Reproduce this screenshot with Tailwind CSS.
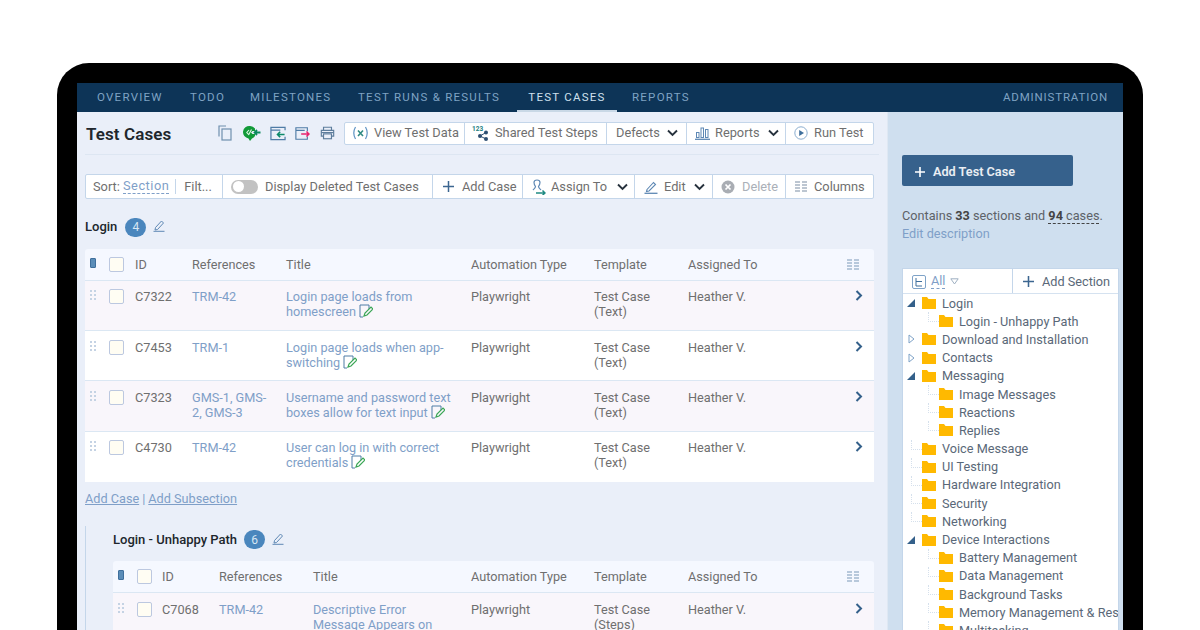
<!DOCTYPE html>
<html>
<head>
<meta charset="utf-8">
<script src="https://cdn.jsdelivr.net/npm/@tailwindcss/browser@4"></script>
</head>
<body class="bg-white font-['Roboto',sans-serif] text-[12.7px] text-[#6f6f6f]">
<div class="h-[630px] w-[1200px] overflow-hidden pt-[63px] px-[57px]">
  <div class="h-[567px] rounded-t-[32px] bg-black pt-[20px] px-[20px]">
    <div class="h-[547px] overflow-hidden flex flex-col">
      <!-- nav -->
      <nav class="h-[29px] shrink-0 bg-[#0d3457] flex items-stretch text-[11.5px] tracking-[1.25px] text-[#7fa3c4]">
        <a class="pl-[20px] w-[113px] flex items-center">OVERVIEW</a>
        <a class="w-[60px] flex items-center">TODO</a>
        <a class="w-[108px] flex items-center">MILESTONES</a>
        <a class="w-[159px] flex items-center whitespace-nowrap">TEST RUNS &amp; RESULTS</a>
        <a class="w-[100px] flex items-center justify-center text-[#cfe0ee] border-b-2 border-[#c9d8e6] whitespace-nowrap pt-[2px]">TEST CASES</a>
        <a class="ml-[15px] flex items-center">REPORTS</a>
        <a class="ml-auto pr-[15px] flex items-center tracking-[0.85px]">ADMINISTRATION</a>
      </nav>
      <div class="flex flex-1 min-h-0">
        <!-- main -->
        <main class="w-[811px] bg-[#eaeff9] shrink-0 border-r border-[#dfe8f3]">
          <div class="mx-[8px] h-[43px] border-b border-[#dde6f2] flex items-center justify-between pr-[5px]">
            <h1 class="text-[17px] font-semibold text-[#20262c] tracking-[0.1px] mt-[4px] ml-[1px]">Test Cases</h1>
            <div class="flex items-center">
              <svg class="w-[14px] h-[16px] mr-[11px]" viewBox="0 0 14 16" fill="none" stroke="#6f8fae" stroke-width="1.2"><path d="M1 11.500V1H8"/><rect x="4" y="4" width="9" height="11"/></svg>
              <svg class="w-[18px] h-[17px] mr-[9px]" viewBox="0 0 18 17"><path d="M7 1a6 6 0 0 1 5 2.600V6H9.500L8 7.500 9.500 9H12v2a6 6 0 0 1-3 2.400L7 16l-1.500-2.600A6 6 0 0 1 7 1z" fill="#129a38"/><path d="M6 5 L3.800 7.500 6 10M8.500 4.500 5.500 10" stroke="#dff5e5" stroke-width="1.100" fill="none"/><path d="M17.500 7.500h-6M14 5 11.500 7.500 14 10" stroke="#0d8a5e" stroke-width="1.800" fill="none"/></svg>
              <svg class="w-[16px] h-[15px] mr-[9px]" viewBox="0 0 17 15" fill="none"><path d="M16 11v3H1V1h15v3M1 4h10" stroke="#4f7ca6" stroke-width="1.300"/><path d="M15.500 8.500H8M10.800 5.700 8 8.500l2.800 2.800" stroke="#0d8a6a" stroke-width="1.700"/></svg>
              <svg class="w-[15px] h-[15px] mr-[10px]" viewBox="0 0 17 15" fill="none"><path d="M14 5V1H1v13h13v-3M1 4h10" stroke="#4f7ca6" stroke-width="1.300"/><path d="M7 8h9M13 5.200 15.800 8 13 10.800" stroke="#e8236d" stroke-width="1.700"/></svg>
              <svg class="w-[15px] h-[16px] mr-[9px]" viewBox="0 0 17 16" fill="none" stroke="#5d7d9c" stroke-width="1.300"><path d="M4 5V1.500h9V5"/><path d="M4 11.500H1.500V5h14v6.500H13"/><rect x="4" y="9" width="9" height="5.500"/><path d="M1.500 7.500h14"/></svg>
              <div class="h-[23px] flex items-stretch bg-white border border-[#c4d6ea] rounded-[2px] text-[12.800px] whitespace-nowrap">
                <span class="w-[120px] flex items-center gap-[5px] pl-[7px] border-r border-[#c4d6ea]"><svg class="w-[17px] h-[14px]" viewBox="0 0 17 14" fill="none"><path d="M3.500 1C1.500 4.500 1.500 9.500 3.500 13M13.500 1c2 3.500 2 8.500 0 12" stroke="#5e93c4" stroke-width="1.200"/><path d="M6 4.500l5 5.500M11 4.500 6 10" stroke="#2f8a82" stroke-width="1.600"/></svg>View Test Data</span>
                <span class="w-[142px] flex items-center gap-[5px] pl-[7px] border-r border-[#c4d6ea]"><svg class="w-[18px] h-[16px]" viewBox="0 0 18 16"><text x="0" y="6" font-size="6.500" font-weight="700" fill="#23807f" font-family="Roboto">123</text><circle cx="8" cy="11" r="2" fill="#2d4f72"/><circle cx="14" cy="7.500" r="2" fill="#2d4f72"/><circle cx="14" cy="14" r="2" fill="#2d4f72"/><path d="M8 11l6-3.500M8 11l6 3" stroke="#2d4f72"/></svg>Shared Test Steps</span>
                <span class="w-[80px] flex items-center justify-between pl-[9px] pr-[8px] border-r border-[#c4d6ea]">Defects<svg class="w-[11px] h-[8px]" viewBox="0 0 11 8" fill="none" stroke="#27323d" stroke-width="1.900"><path d="M1 1.500 5.500 6 10 1.500"/></svg></span>
                <span class="w-[99px] flex items-center gap-[5px] pl-[8px] border-r border-[#c4d6ea]"><svg class="w-[15px] h-[14px]" viewBox="0 0 15 14" fill="none" stroke="#5e88b4"><rect x="1.500" y="6.500" width="2.500" height="5"/><rect x="6" y="2" width="2.500" height="9.500"/><rect x="10.500" y="3.500" width="2.500" height="8"/><path d="M0 13.300h15" stroke-width="1.300"/></svg>Reports<svg class="w-[11px] h-[8px] ml-[3px]" viewBox="0 0 11 8" fill="none" stroke="#27323d" stroke-width="1.900"><path d="M1 1.500 5.500 6 10 1.500"/></svg></span>
                <span class="w-[87px] flex items-center gap-[6px] pl-[8px]"><svg class="w-[14px] h-[14px]" viewBox="0 0 14 14"><circle cx="7" cy="7" r="6.200" fill="none" stroke="#8badcf"/><path d="M5.200 4v6L10 7z" fill="#3f6f9c"/></svg>Run Test</span>
              </div>
            </div>
          </div>
          <!-- toolbar 2 -->
          <div class="ml-[8px] mr-[13px] mt-[19px] h-[25px] flex items-stretch bg-white border border-[#c4d6ea] rounded-[2px] text-[12.800px] whitespace-nowrap">
            <span class="w-[137px] flex items-center pl-[7px] border-r border-[#c4d6ea]">Sort:&nbsp;<span class="text-[#7f9fc8] border-b border-dashed border-[#7f9fc8] leading-[14px] tracking-[0.5px]">Section</span><span class="w-px h-[15px] bg-[#c4d6ea] ml-[6px] mr-[8px]"></span>Filt...</span>
            <span class="w-[210px] flex items-center gap-[7px] pl-[8px] border-r border-[#c4d6ea]"><span class="w-[27px] h-[14px] rounded-full bg-[#c2c2c2] p-[1.500px] shrink-0"><span class="block w-[11px] h-[11px] rounded-full bg-white"></span></span>Display Deleted Test Cases</span>
            <span class="w-[90px] flex items-center gap-[8px] pl-[10px] border-r border-[#c4d6ea]"><svg class="w-[11px] h-[11px]" viewBox="0 0 11 11" stroke="#3c6690" stroke-width="1.500"><path d="M5.500 0v11M0 5.500h11"/></svg>Add Case</span>
            <span class="w-[112px] flex items-center gap-[5px] pl-[8px] border-r border-[#c4d6ea]"><svg class="w-[15px] h-[16px]" viewBox="0 0 15 16" fill="none"><path d="M2 11c1-1 2.500-2 2.500-3.500C3.500 6 3 5 3 3.500 3 2 4 1 6 1s3 1 3 2.500C9 5 8.500 6 7.500 7.500 7.500 9 9 10 10 11" stroke="#5e88b4" stroke-width="1.200"/><path d="M5 14h9M11.500 11.500 14 14l-2.500 2.200" stroke="#1f8a82" stroke-width="1.500"/></svg>Assign To<svg class="w-[11px] h-[8px] ml-[5px]" viewBox="0 0 11 8" fill="none" stroke="#27323d" stroke-width="1.900"><path d="M1 1.500 5.500 6 10 1.500"/></svg></span>
            <span class="w-[78px] flex items-center gap-[6px] pl-[9px] border-r border-[#c4d6ea]"><svg class="w-[14px] h-[14px]" viewBox="0 0 14 14" fill="none" stroke="#5e88b4" stroke-width="1.100"><path d="M3 9.500 9.500 2.500l2 2L5 11l-2.500.5z"/><path d="M0.500 13.300h13" stroke-width="1.300"/></svg>Edit<svg class="w-[11px] h-[8px] ml-[2px]" viewBox="0 0 11 8" fill="none" stroke="#27323d" stroke-width="1.900"><path d="M1 1.500 5.500 6 10 1.500"/></svg></span>
            <span class="w-[73px] flex items-center gap-[7px] pl-[8px] border-r border-[#c4d6ea] text-[#aab0b8]"><svg class="w-[14px] h-[14px]" viewBox="0 0 14 14"><circle cx="7" cy="7" r="6.500" fill="#a9adb3"/><path d="M4.500 4.500l5 5M9.500 4.500l-5 5" stroke="#fff" stroke-width="1.700"/></svg>Delete</span>
            <span class="flex items-center gap-[7px] pl-[9px]"><svg class="w-[12px] h-[11px]" viewBox="0 0 12 11" stroke="#7a8da3"><path d="M0 1h5M7 1h5M0 4h5M7 4h5M0 7h5M7 7h5M0 10h5M7 10h5"/></svg>Columns</span>
          </div>

          <!-- Login section -->
          <div class="mx-[8px] mt-[16px] h-[24px] flex items-center gap-[8px]">
            <span class="text-[13px] font-medium text-[#20262c]">Login</span>
            <span class="w-[21px] h-[19px] rounded-full bg-[#4a86bd] text-[#d8e7f4] text-[12px] flex items-center justify-center">4</span>
            <svg class="w-[12px] h-[13px] ml-[-1px] mt-[-3px]" viewBox="0 0 12 13" fill="none" stroke="#5e88b4"><path d="M2.500 8.500 8.500 2l2 2-6 6.500-2.500.5z"/><path d="M0.500 12.300h11"/></svg>
          </div>
          <div class="ml-[8px] mr-[13px] mt-[10px] rounded-t-[3px] overflow-hidden">
            <div class="h-[32px] bg-[#f5f8ff] border-b border-[#dbe7f3] grid grid-cols-[24px_26px_57px_94px_185px_123px_94px_159px_1fr] items-center">
              <span class="pl-[5px] flex"><span class="w-[6px] h-[10px] rounded-[1px] bg-[#5b8db8] border border-[#3f6f9c] mt-[-4px]"></span></span>
              <span class="w-[15px] h-[15px] rounded-[2px] bg-[#fffdf3] border border-[#bcc8e0]"></span>
              <span>ID</span><span>References</span><span>Title</span><span>Automation Type</span><span>Template</span><span>Assigned To</span>
              <svg class="w-[12px] h-[11px]" viewBox="0 0 12 11" stroke="#7a99b8"><path d="M0 1h5M7 1h5M0 4h5M7 4h5M0 7h5M7 7h5M0 10h5M7 10h5"/></svg>
            </div>
            <div class="h-[50px] bg-[#f9f6fb] border-b border-[#dbe7f3] grid grid-cols-[24px_26px_57px_94px_185px_123px_94px_159px_1fr] pt-[8px] leading-[15px]">
              <span class="pl-[5px] pt-[1px]"><svg class="w-[7px] h-[11px]" viewBox="0 0 7 11" fill="#c5d3e4"><rect width="2" height="2"/><rect x="4" width="2" height="2"/><rect y="4" width="2" height="2"/><rect x="4" y="4" width="2" height="2"/><rect y="8" width="2" height="2"/><rect x="4" y="8" width="2" height="2"/></svg></span>
              <span class="w-[15px] h-[15px] rounded-[2px] bg-[#fffdf3] border border-[#bcc8e0]"></span>
              <span>C7322</span><span class="text-[#7f9fc8]">TRM-42</span>
              <span class="text-[#7f9fc8]">Login page loads from<br>homescreen <svg class="inline w-[14px] h-[14px] align-[-2px]" viewBox="0 0 14 14" fill="none"><path d="M4 13H1V1h9v4" stroke="#4f7ca6"/><path d="M5 12l1-3 6-6 2 2-6 6z" stroke="#3aa655" stroke-width="1.200"/></svg></span>
              <span>Playwright</span><span>Test Case<br>(Text)</span><span>Heather V.</span>
              <svg class="w-[8px] h-[11px] ml-[8px] mt-[1px]" viewBox="0 0 8 11" fill="none" stroke="#34608a" stroke-width="2"><path d="M1.500 1 6 5.500 1.500 10"/></svg>
            </div>
            <div class="h-[50px] bg-white border-b border-[#dbe7f3] grid grid-cols-[24px_26px_57px_94px_185px_123px_94px_159px_1fr] pt-[9px] leading-[15px]">
              <span class="pl-[5px] pt-[1px]"><svg class="w-[7px] h-[11px]" viewBox="0 0 7 11" fill="#c5d3e4"><rect width="2" height="2"/><rect x="4" width="2" height="2"/><rect y="4" width="2" height="2"/><rect x="4" y="4" width="2" height="2"/><rect y="8" width="2" height="2"/><rect x="4" y="8" width="2" height="2"/></svg></span>
              <span class="w-[15px] h-[15px] rounded-[2px] bg-[#fffdf3] border border-[#bcc8e0]"></span>
              <span>C7453</span><span class="text-[#7f9fc8]">TRM-1</span>
              <span class="text-[#7f9fc8]">Login page loads when app-<br>switching <svg class="inline w-[14px] h-[14px] align-[-2px]" viewBox="0 0 14 14" fill="none"><path d="M4 13H1V1h9v4" stroke="#4f7ca6"/><path d="M5 12l1-3 6-6 2 2-6 6z" stroke="#3aa655" stroke-width="1.200"/></svg></span>
              <span>Playwright</span><span>Test Case<br>(Text)</span><span>Heather V.</span>
              <svg class="w-[8px] h-[11px] ml-[8px] mt-[1px]" viewBox="0 0 8 11" fill="none" stroke="#34608a" stroke-width="2"><path d="M1.500 1 6 5.500 1.500 10"/></svg>
            </div>
            <div class="h-[51px] bg-[#f9f6fb] border-b border-[#dbe7f3] grid grid-cols-[24px_26px_57px_94px_185px_123px_94px_159px_1fr] pt-[9px] leading-[15px]">
              <span class="pl-[5px] pt-[1px]"><svg class="w-[7px] h-[11px]" viewBox="0 0 7 11" fill="#c5d3e4"><rect width="2" height="2"/><rect x="4" width="2" height="2"/><rect y="4" width="2" height="2"/><rect x="4" y="4" width="2" height="2"/><rect y="8" width="2" height="2"/><rect x="4" y="8" width="2" height="2"/></svg></span>
              <span class="w-[15px] h-[15px] rounded-[2px] bg-[#fffdf3] border border-[#bcc8e0]"></span>
              <span>C7323</span><span class="text-[#7f9fc8]">GMS-1, GMS-<br>2, GMS-3</span>
              <span class="text-[#7f9fc8] whitespace-nowrap">Username and password text<br>boxes allow for text input <svg class="inline w-[14px] h-[14px] align-[-2px]" viewBox="0 0 14 14" fill="none"><path d="M4 13H1V1h9v4" stroke="#4f7ca6"/><path d="M5 12l1-3 6-6 2 2-6 6z" stroke="#3aa655" stroke-width="1.200"/></svg></span>
              <span>Playwright</span><span>Test Case<br>(Text)</span><span>Heather V.</span>
              <svg class="w-[8px] h-[11px] ml-[8px] mt-[1px]" viewBox="0 0 8 11" fill="none" stroke="#34608a" stroke-width="2"><path d="M1.500 1 6 5.500 1.500 10"/></svg>
            </div>
            <div class="h-[50px] bg-white grid grid-cols-[24px_26px_57px_94px_185px_123px_94px_159px_1fr] pt-[8px] leading-[15px]">
              <span class="pl-[5px] pt-[1px]"><svg class="w-[7px] h-[11px]" viewBox="0 0 7 11" fill="#c5d3e4"><rect width="2" height="2"/><rect x="4" width="2" height="2"/><rect y="4" width="2" height="2"/><rect x="4" y="4" width="2" height="2"/><rect y="8" width="2" height="2"/><rect x="4" y="8" width="2" height="2"/></svg></span>
              <span class="w-[15px] h-[15px] rounded-[2px] bg-[#fffdf3] border border-[#bcc8e0]"></span>
              <span>C4730</span><span class="text-[#7f9fc8]">TRM-42</span>
              <span class="text-[#7f9fc8] whitespace-nowrap">User can log in with correct<br>credentials <svg class="inline w-[14px] h-[14px] align-[-2px]" viewBox="0 0 14 14" fill="none"><path d="M4 13H1V1h9v4" stroke="#4f7ca6"/><path d="M5 12l1-3 6-6 2 2-6 6z" stroke="#3aa655" stroke-width="1.200"/></svg></span>
              <span>Playwright</span><span>Test Case<br>(Text)</span><span>Heather V.</span>
              <svg class="w-[8px] h-[11px] ml-[8px] mt-[1px]" viewBox="0 0 8 11" fill="none" stroke="#34608a" stroke-width="2"><path d="M1.500 1 6 5.500 1.500 10"/></svg>
            </div>
          </div>
          <div class="mx-[8px] mt-[9px] text-[#7f9fc8] leading-[15px]"><a class="underline">Add Case</a><span class="mx-[3px]">|</span><a class="underline">Add Subsection</a></div>

          <!-- subsection -->
          <div class="ml-[8px] mr-[13px] mt-[22px] border-l border-[#c4d6ea] pl-[27px] h-[200px]">
            <div class="h-[24px] mt-[-2px] flex items-center gap-[7px] pt-[3px]">
              <span class="text-[13px] font-medium text-[#20262c]">Login - Unhappy Path</span>
              <span class="w-[21px] h-[19px] rounded-full bg-[#4a86bd] text-[#d8e7f4] text-[12px] flex items-center justify-center">6</span>
              <svg class="w-[12px] h-[13px] mt-[-3px]" viewBox="0 0 12 13" fill="none" stroke="#5e88b4"><path d="M2.500 8.500 8.500 2l2 2-6 6.500-2.500.5z"/><path d="M0.500 12.300h11"/></svg>
            </div>
            <div class="mt-[11px] rounded-t-[3px] overflow-hidden">
              <div class="h-[32px] bg-[#f5f8ff] border-b border-[#dbe7f3] grid grid-cols-[24px_25px_57px_94px_158px_123px_94px_159px_1fr] items-center">
                <span class="pl-[5px] flex"><span class="w-[6px] h-[10px] rounded-[1px] bg-[#5b8db8] border border-[#3f6f9c] mt-[-4px]"></span></span>
                <span class="w-[15px] h-[15px] rounded-[2px] bg-[#fffdf3] border border-[#bcc8e0]"></span>
                <span>ID</span><span>References</span><span>Title</span><span>Automation Type</span><span>Template</span><span>Assigned To</span>
                <svg class="w-[12px] h-[11px]" viewBox="0 0 12 11" stroke="#7a99b8"><path d="M0 1h5M7 1h5M0 4h5M7 4h5M0 7h5M7 7h5M0 10h5M7 10h5"/></svg>
              </div>
              <div class="h-[60px] bg-[#f9f6fb] grid grid-cols-[24px_25px_57px_94px_158px_123px_94px_159px_1fr] pt-[9px] leading-[15px]">
                <span class="pl-[5px] pt-[1px]"><svg class="w-[7px] h-[11px]" viewBox="0 0 7 11" fill="#c5d3e4"><rect width="2" height="2"/><rect x="4" width="2" height="2"/><rect y="4" width="2" height="2"/><rect x="4" y="4" width="2" height="2"/><rect y="8" width="2" height="2"/><rect x="4" y="8" width="2" height="2"/></svg></span>
                <span class="w-[15px] h-[15px] rounded-[2px] bg-[#fffdf3] border border-[#bcc8e0]"></span>
                <span>C7068</span><span class="text-[#7f9fc8]">TRM-42</span>
                <span class="text-[#7f9fc8] whitespace-nowrap">Descriptive Error<br>Message Appears on</span>
                <span>Playwright</span><span>Test Case<br>(Steps)</span><span>Heather V.</span>
                <svg class="w-[8px] h-[11px] ml-[8px] mt-[1px]" viewBox="0 0 8 11" fill="none" stroke="#34608a" stroke-width="2"><path d="M1.500 1 6 5.500 1.500 10"/></svg>
              </div>
            </div>
          </div>
        </main>
        <!-- sidebar -->
        <aside class="flex-1 min-w-0 bg-[#cfdfef] pl-[14px] pr-[4px] pt-[43px]">
          <button class="w-[171px] h-[31px] rounded-[2px] bg-[#36618c] text-white/90 font-semibold text-[12.700px] flex items-center gap-[8px] pl-[13px] pt-[2px]"><svg class="w-[10px] h-[10px]" viewBox="0 0 10 10" stroke="#fff" stroke-width="1.600"><path d="M5 0v10M0 5h10"/></svg>Add Test Case</button>
          <p class="mt-[21px] leading-[18px] text-[#5d6268]">Contains <b class="text-[#444]">33</b> sections and <span class="border-b border-dashed border-[#444]"><b class="text-[#444]">94</b> cases</span>.<br><span class="text-[#7f9fc8]">Edit description</span></p>
          <div class="mt-[25px] bg-white border border-[#c4d6ea] h-[400px] overflow-hidden text-[#5a6878]">
            <div class="h-[25px] flex items-stretch border-b border-[#d5e2f0]">
              <span class="w-[110px] border-r border-[#c4d6ea] flex items-center gap-[5px] pl-[9px] pt-[1px]"><svg class="w-[14px] h-[14px]" viewBox="0 0 14 14" fill="none" stroke="#7fa3c8"><rect x=".5" y=".5" width="13" height="13" rx="1.500"/><path d="M4 3v8h6M4 6.500h6" stroke="#3f6f9c"/></svg><span class="text-[#7f9fc8] border-b border-dashed border-[#7f9fc8] leading-[14px]">All</span><svg class="w-[9px] h-[7px]" viewBox="0 0 9 7" fill="none" stroke="#9fb0c2"><path d="M.8.800h7.400L4.500 6z"/></svg></span>
              <span class="flex items-center gap-[8px] pl-[10px] pt-[1px] whitespace-nowrap"><svg class="w-[11px] h-[11px]" viewBox="0 0 10 10" stroke="#3c6690" stroke-width="1.400"><path d="M5 0v10M0 5h10"/></svg>Add Section</span>
            </div>
            <ul class="whitespace-nowrap overflow-hidden">
              <li class="h-[18.200px] flex items-center"><svg class="w-[9px] h-[8px] ml-[4px] mr-[6px]" viewBox="0 0 9 8" fill="#34608a"><path d="M8 0v8H0z"/></svg><svg class="w-[14px] h-[12px] mr-[6px]" viewBox="0 0 14 12" fill="#ffb900"><path d="M0 0h5l1.500 2H14v10H0z"/></svg>Login</li>
              <li class="h-[18.200px] flex items-center pl-[25px]"><span class="w-[11px] h-[10px] self-start border-l border-b border-dotted border-[#d5e0ec]"></span><svg class="w-[14px] h-[12px] mr-[6px]" viewBox="0 0 14 12" fill="#ffb900"><path d="M0 0h5l1.500 2H14v10H0z"/></svg>Login - Unhappy Path</li>
              <li class="h-[18.200px] flex items-center"><svg class="w-[7px] h-[10px] ml-[5px] mr-[7px]" viewBox="0 0 7 10" fill="none" stroke="#7fa3c8"><path d="M1 1v8l5-4z"/></svg><svg class="w-[14px] h-[12px] mr-[6px]" viewBox="0 0 14 12" fill="#ffb900"><path d="M0 0h5l1.500 2H14v10H0z"/></svg>Download and Installation</li>
              <li class="h-[18.200px] flex items-center"><svg class="w-[7px] h-[10px] ml-[5px] mr-[7px]" viewBox="0 0 7 10" fill="none" stroke="#7fa3c8"><path d="M1 1v8l5-4z"/></svg><svg class="w-[14px] h-[12px] mr-[6px]" viewBox="0 0 14 12" fill="#ffb900"><path d="M0 0h5l1.500 2H14v10H0z"/></svg>Contacts</li>
              <li class="h-[18.200px] flex items-center"><svg class="w-[9px] h-[8px] ml-[4px] mr-[6px]" viewBox="0 0 9 8" fill="#34608a"><path d="M8 0v8H0z"/></svg><svg class="w-[14px] h-[12px] mr-[6px]" viewBox="0 0 14 12" fill="#ffb900"><path d="M0 0h5l1.500 2H14v10H0z"/></svg>Messaging</li>
              <li class="h-[18.200px] flex items-center pl-[25px]"><span class="w-[11px] h-[10px] self-start border-l border-b border-dotted border-[#d5e0ec]"></span><svg class="w-[14px] h-[12px] mr-[6px]" viewBox="0 0 14 12" fill="#ffb900"><path d="M0 0h5l1.500 2H14v10H0z"/></svg>Image Messages</li>
              <li class="h-[18.200px] flex items-center pl-[25px]"><span class="w-[11px] h-[10px] self-start border-l border-b border-dotted border-[#d5e0ec]"></span><svg class="w-[14px] h-[12px] mr-[6px]" viewBox="0 0 14 12" fill="#ffb900"><path d="M0 0h5l1.500 2H14v10H0z"/></svg>Reactions</li>
              <li class="h-[18.200px] flex items-center pl-[25px]"><span class="w-[11px] h-[10px] self-start border-l border-b border-dotted border-[#d5e0ec]"></span><svg class="w-[14px] h-[12px] mr-[6px]" viewBox="0 0 14 12" fill="#ffb900"><path d="M0 0h5l1.500 2H14v10H0z"/></svg>Replies</li>
              <li class="h-[18.200px] flex items-center pl-[8px]"><span class="w-[11px] h-[10px] self-start border-l border-b border-dotted border-[#d5e0ec]"></span><svg class="w-[14px] h-[12px] mr-[6px]" viewBox="0 0 14 12" fill="#ffb900"><path d="M0 0h5l1.500 2H14v10H0z"/></svg>Voice Message</li>
              <li class="h-[18.200px] flex items-center pl-[8px]"><span class="w-[11px] h-[10px] self-start border-l border-b border-dotted border-[#d5e0ec]"></span><svg class="w-[14px] h-[12px] mr-[6px]" viewBox="0 0 14 12" fill="#ffb900"><path d="M0 0h5l1.500 2H14v10H0z"/></svg>UI Testing</li>
              <li class="h-[18.200px] flex items-center pl-[8px]"><span class="w-[11px] h-[10px] self-start border-l border-b border-dotted border-[#d5e0ec]"></span><svg class="w-[14px] h-[12px] mr-[6px]" viewBox="0 0 14 12" fill="#ffb900"><path d="M0 0h5l1.500 2H14v10H0z"/></svg>Hardware Integration</li>
              <li class="h-[18.200px] flex items-center pl-[8px]"><span class="w-[11px] h-[10px] self-start border-l border-b border-dotted border-[#d5e0ec]"></span><svg class="w-[14px] h-[12px] mr-[6px]" viewBox="0 0 14 12" fill="#ffb900"><path d="M0 0h5l1.500 2H14v10H0z"/></svg>Security</li>
              <li class="h-[18.200px] flex items-center pl-[8px]"><span class="w-[11px] h-[10px] self-start border-l border-b border-dotted border-[#d5e0ec]"></span><svg class="w-[14px] h-[12px] mr-[6px]" viewBox="0 0 14 12" fill="#ffb900"><path d="M0 0h5l1.500 2H14v10H0z"/></svg>Networking</li>
              <li class="h-[18.200px] flex items-center"><svg class="w-[9px] h-[8px] ml-[4px] mr-[6px]" viewBox="0 0 9 8" fill="#34608a"><path d="M8 0v8H0z"/></svg><svg class="w-[14px] h-[12px] mr-[6px]" viewBox="0 0 14 12" fill="#ffb900"><path d="M0 0h5l1.500 2H14v10H0z"/></svg>Device Interactions</li>
              <li class="h-[18.200px] flex items-center pl-[25px]"><span class="w-[11px] h-[10px] self-start border-l border-b border-dotted border-[#d5e0ec]"></span><svg class="w-[14px] h-[12px] mr-[6px]" viewBox="0 0 14 12" fill="#ffb900"><path d="M0 0h5l1.500 2H14v10H0z"/></svg>Battery Management</li>
              <li class="h-[18.200px] flex items-center pl-[25px]"><span class="w-[11px] h-[10px] self-start border-l border-b border-dotted border-[#d5e0ec]"></span><svg class="w-[14px] h-[12px] mr-[6px]" viewBox="0 0 14 12" fill="#ffb900"><path d="M0 0h5l1.500 2H14v10H0z"/></svg>Data Management</li>
              <li class="h-[18.200px] flex items-center pl-[25px]"><span class="w-[11px] h-[10px] self-start border-l border-b border-dotted border-[#d5e0ec]"></span><svg class="w-[14px] h-[12px] mr-[6px]" viewBox="0 0 14 12" fill="#ffb900"><path d="M0 0h5l1.500 2H14v10H0z"/></svg>Background Tasks</li>
              <li class="h-[18.200px] flex items-center pl-[25px]"><span class="w-[11px] h-[10px] self-start shrink-0 border-l border-b border-dotted border-[#d5e0ec]"></span><svg class="w-[14px] h-[12px] mr-[6px] shrink-0" viewBox="0 0 14 12" fill="#ffb900"><path d="M0 0h5l1.500 2H14v10H0z"/></svg>Memory Management &amp; Res</li>
              <li class="h-[18.200px] flex items-center pl-[25px]"><span class="w-[11px] h-[10px] self-start border-l border-b border-dotted border-[#d5e0ec]"></span><svg class="w-[14px] h-[12px] mr-[6px]" viewBox="0 0 14 12" fill="#ffb900"><path d="M0 0h5l1.500 2H14v10H0z"/></svg>Multitasking</li>
            </ul>
          </div>
        </aside>
      </div>
    </div>
  </div>
</div>
</body>
</html>
